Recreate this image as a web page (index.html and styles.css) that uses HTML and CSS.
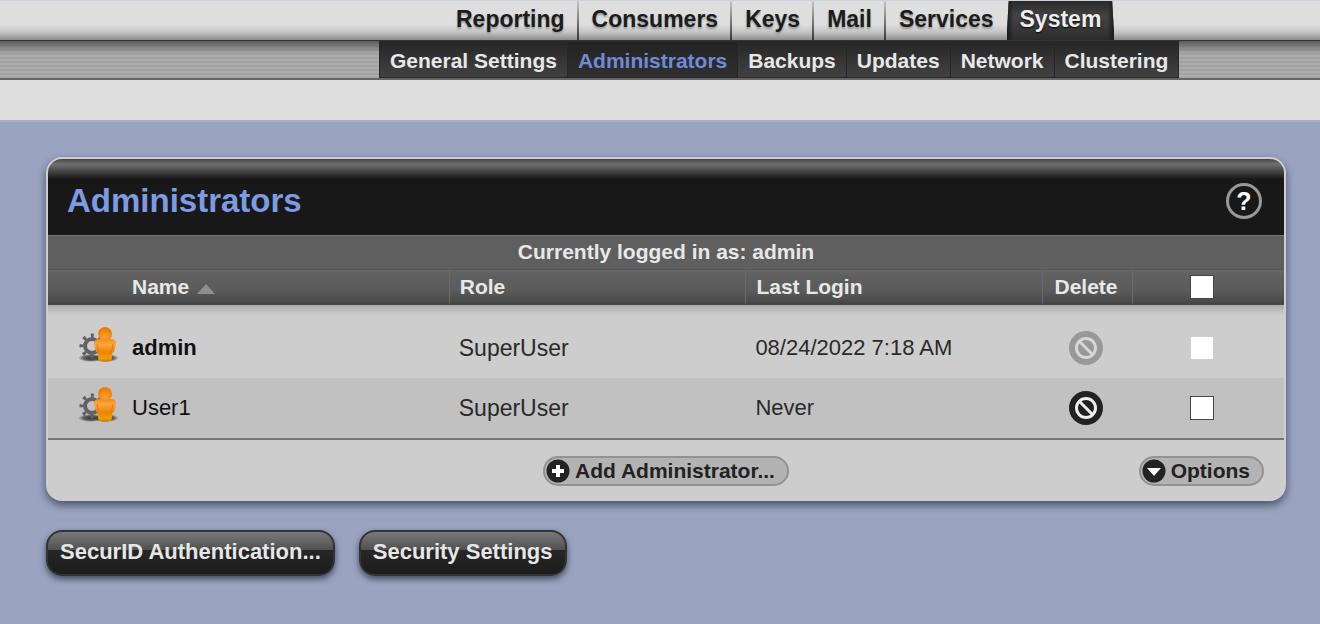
FILE: index.html
```html
<!DOCTYPE html>
<html lang="en">
<head>
	<meta charset="UTF-8">
	<title>Administrators</title>
	<link rel="stylesheet" href="styles.css">
</head>
<body>

<!-- shared icon shapes -->
<svg class="defs" width="0" height="0" aria-hidden="true">
	<defs>
		<linearGradient id="g-body" x1="0" y1="0" x2="0" y2="1">
			<stop offset="0" stop-color="#f58a0c"/>
			<stop offset="0.25" stop-color="#fba544"/>
			<stop offset="0.6" stop-color="#ee8200"/>
			<stop offset="0.85" stop-color="#f0a000"/>
			<stop offset="1" stop-color="#c07a10"/>
		</linearGradient>
		<radialGradient id="g-head" cx="0.5" cy="0.7" r="0.6">
			<stop offset="0" stop-color="#fba13c"/>
			<stop offset="1" stop-color="#ee7d00"/>
		</radialGradient>
		<radialGradient id="g-shadow">
			<stop offset="0" stop-color="#222" stop-opacity="0.9"/>
			<stop offset="0.6" stop-color="#333" stop-opacity="0.7"/>
			<stop offset="1" stop-color="#444" stop-opacity="0"/>
		</radialGradient>
	</defs>
	<symbol id="icon-user" viewBox="0 0 42 42">
		<ellipse cx="13" cy="31" rx="13" ry="4" fill="url(#g-shadow)"/>
		<ellipse cx="28" cy="31" rx="13" ry="4" fill="url(#g-shadow)"/>
		<g fill="none" stroke="#626262">
			<circle cx="14" cy="19" r="7" stroke-width="4"/>
			<circle cx="14" cy="19" r="10.500" stroke-width="4" stroke-dasharray="3 5.247" stroke-dashoffset="1.5"/>
		</g>
		<path d="M18.500 12.500Q27 10.500 35.500 12.500Q38.500 14 38 17L36 25L34.500 25.500L33.500 33.500Q27 36 20.500 33.500L19.500 25.500L18 25L16 17Q15.500 14 18.500 12.500Z" fill="url(#g-body)"/>
		<path d="M19 17L20.500 25M35 17L33.500 25" stroke="#e08010" fill="none"/>
		<circle cx="27" cy="7" r="7" fill="url(#g-head)"/>
	</symbol>
	<symbol id="icon-delete" viewBox="0 0 34 34">
		<circle cx="17" cy="17" r="17" fill="#222"/>
		<circle cx="17" cy="17" r="9.500" fill="none" stroke="#eee" stroke-width="3"/>
		<path d="M10.500 10.500L23.500 23.500" stroke="#eee" stroke-width="3"/>
	</symbol>
</svg>

<header>
	<nav class="main-nav">
		<a href="#">Reporting</a>
		<a href="#">Consumers</a>
		<a href="#">Keys</a>
		<a href="#">Mail</a>
		<a href="#">Services</a>
		<a href="#" class="active">System</a>
	</nav>
	<div class="sub-bar">
		<nav class="sub-nav">
			<a href="#">General Settings</a>
			<a href="#" class="active">Administrators</a>
			<a href="#">Backups</a>
			<a href="#">Updates</a>
			<a href="#">Network</a>
			<a href="#">Clustering</a>
		</nav>
	</div>
	<div class="strip"></div>
</header>

<main>
	<section class="panel">
		<div class="panel-title">
			<h1>Administrators</h1>
			<button type="button" class="help" aria-label="Help">?</button>
		</div>
		<div class="login-info">Currently logged in as: admin</div>
		<table>
			<colgroup>
				<col class="c-icon">
				<col class="c-name">
				<col class="c-role">
				<col class="c-login">
				<col class="c-delete">
				<col class="c-check">
			</colgroup>
			<thead>
			<tr>
				<th></th>
				<th class="name">Name<span class="sort"></span></th>
				<th>Role</th>
				<th>Last Login</th>
				<th class="center">Delete</th>
				<th class="check"><input type="checkbox" aria-label="Select all"></th>
			</tr>
			</thead>
			<tbody>
			<tr class="first">
				<td class="icon"><svg class="user" width="42" height="42"><use href="#icon-user"/></svg></td>
				<td class="name me">admin</td>
				<td class="role">SuperUser</td>
				<td>08/24/2022 7:18 AM</td>
				<td class="center"><button type="button" class="delete" aria-label="Delete admin" disabled><svg width="34" height="34"><use href="#icon-delete"/></svg></button></td>
				<td class="check"><input type="checkbox" aria-label="Select admin" disabled></td>
			</tr>
			<tr>
				<td class="icon"><svg class="user" width="42" height="42"><use href="#icon-user"/></svg></td>
				<td class="name">User1</td>
				<td class="role">SuperUser</td>
				<td>Never</td>
				<td class="center"><button type="button" class="delete" aria-label="Delete User1"><svg width="34" height="34"><use href="#icon-delete"/></svg></button></td>
				<td class="check"><input type="checkbox" aria-label="Select User1"></td>
			</tr>
			</tbody>
		</table>
		<div class="panel-foot">
			<button type="button" class="pill add">
				<svg width="24" height="24" viewBox="0 0 24 24"><circle cx="12" cy="12" r="11.500" fill="#222"/><path d="M12 6V18M6 12H18" stroke="#fff" stroke-width="4"/></svg>
				Add Administrator...
			</button>
			<button type="button" class="pill options">
				<svg width="24" height="24" viewBox="0 0 24 24"><circle cx="12" cy="12" r="11.500" fill="#222"/><path d="M5 9H19L12 17Z" fill="#fff"/></svg>
				Options
			</button>
		</div>
	</section>

	<div class="actions">
		<button type="button" class="btn">SecurID Authentication...</button>
		<button type="button" class="btn">Security Settings</button>
	</div>
</main>

</body>
</html>
```

FILE: styles.css
```css
* {
    box-sizing: border-box;
    padding: 0;
    margin: 0;
}

body {
    background: #9aa4c0;
    font: 22px "Liberation Sans", Arial, sans-serif;
    color: #2a2a2a;
}

button {
    font: inherit;
    border: 0;
    background: none;
    cursor: pointer;
}

a {
    text-decoration: none;
}

.defs {
    display: block;
}

/* top navigation */
.main-nav {
    display: flex;
    gap: 1px;
    height: 40px;
    padding-left: 444px;
    border-top: 1px solid #cdd3de;
    background: linear-gradient(#dedede 60%, #c4c4c4 80%, #8c8c8c);
}

.main-nav a {
    padding: 0 12px;
    border-right: 2px solid #444;
    border-image: linear-gradient(#c8c8c8, #333) 1;
    font-size: 23px;
    font-weight: bold;
    line-height: 36px;
    color: #1c1c1c;
    text-shadow: 0 2px 2px #999;
}

.main-nav a:nth-child(5) {
    border-right: 0;
}

.main-nav .active {
    padding: 0 13px;
    border: 0;
    background: linear-gradient(to right, #1a1a1a, transparent 6%, transparent 94%, #1a1a1a), linear-gradient(#2a2a2a, #444 40%, #2c2c2c);
    color: #eee;
    text-shadow: 0 1px 2px #000;
    clip-path: polygon(2% 0, 98% 0, 100% 100%, 0 100%);
}

.sub-bar {
    display: flex;
    height: 40px;
    padding-left: 379px;
    border-top: 1px solid #333;
    border-bottom: 2px solid #666;
    background: linear-gradient(#5c5c5c, rgba(140, 140, 140, 0) 35%), repeating-linear-gradient(#a2a2a2 0 2px, #acacac 2px 4px);
}

.sub-nav {
    display: flex;
    border: 1px solid #282828;
    background: linear-gradient(#262626, #424242);
}

.sub-nav a {
    padding: 0 10px;
    border-right: 1px solid #262626;
    font-size: 21px;
    font-weight: bold;
    line-height: 37px;
    color: #e8e8e8;
}

.sub-nav a:last-child {
    border: 0;
}

.sub-nav .active {
    background: linear-gradient(#222, #303030);
    color: #6f8bd6;
}

.strip {
    height: 42px;
    border-bottom: 2px solid #adb0b8;
    background: #dedede;
}

main {
    padding: 35px 34px 40px 46px;
}

/* panel */
.panel {
    border: 2px solid #ccced2;
    border-radius: 16px;
    background: #cdcdcd;
    box-shadow: 0 4px 8px rgba(30, 35, 55, 0.65);
    overflow: hidden;
}

.panel-title {
    display: flex;
    align-items: center;
    justify-content: space-between;
    height: 76px;
    padding: 8px 22px 0 19px;
    background: linear-gradient(#444, #707070 5px, #181818 20px);
}

.panel-title h1 {
    font-size: 33px;
    color: #7d9be0;
}

.help {
    width: 36px;
    height: 36px;
    border: 3px solid #999;
    border-radius: 50%;
    font-size: 25px;
    font-weight: bold;
    line-height: 30px;
    color: #fff;
}

.login-info {
    height: 34px;
    border-top: 1px solid #777;
    background: #5f5f5f;
    font-size: 21px;
    font-weight: bold;
    line-height: 32px;
    text-align: center;
    color: #e8e8e8;
}

table {
    width: 100%;
    table-layout: fixed;
    border-collapse: separate;
    border-spacing: 0;
}

.c-icon {
    width: 84px;
}

.c-role,
.c-login {
    width: 24%;
}

.c-delete {
    width: 90px;
}

.c-check {
    width: 152px;
}

th {
    height: 36px;
    padding-left: 10px;
    border-top: 1px solid #555;
    border-bottom: 2px solid #444;
    border-left: 1px solid #6a6a6a;
    background: linear-gradient(#666, #5f5f5f 20%, #5c5c5c 60%, #484848);
    font-size: 21px;
    text-align: left;
    color: #e8e8e8;
}

th:nth-child(-n+2) {
    border-left: 0;
}

td {
    height: 60px;
    padding-left: 10px;
    background: #c1c1c1;
}

.first td {
    height: 73px;
    padding-top: 13px;
    background: linear-gradient(#aaa, #cdcdcd 10px);
}

th.name,
td.name {
    padding-left: 0;
}

td.name {
    color: #111;
}

.me {
    font-weight: bold;
}

.role {
    font-size: 23px;
}

td.icon {
    padding-left: 30px;
}

.user,
.delete,
.delete svg,
.pill svg {
    display: block;
}

.sort {
    display: inline-block;
    margin-left: 8px;
    border: 9px solid transparent;
    border-top: 0;
    border-bottom: 10px solid #8e8e8e;
}

th.center,
td.center {
    padding-left: 0;
    padding-right: 3px;
    text-align: center;
}

.delete {
    margin: 0 auto;
}

.delete:disabled {
    opacity: 0.3;
}

th.check,
td.check {
    padding-left: 0;
    padding-right: 13px;
    text-align: center;
}

input {
    display: block;
    width: 24px;
    height: 24px;
    margin: 0 auto;
    border: 1px solid #444;
    background: #fff;
    appearance: none;
}

input:checked {
    box-shadow: inset 0 0 0 5px #fff;
    background: #333;
}

input:disabled {
    border-color: #cdcdcd;
}

.panel-foot {
    display: grid;
    grid-template-columns: 1fr auto 1fr;
    align-items: center;
    height: 61px;
    padding: 2px 20px 0;
    border-top: 2px solid #777;
}

.pill {
    display: flex;
    align-items: center;
    gap: 5px;
    height: 30px;
    padding: 0 12px 0 1px;
    border: 2px solid #929292;
    border-radius: 15px;
    background: #b3b3b3;
    font-size: 21px;
    font-weight: bold;
    color: #222;
}

.add {
    grid-column: 2;
}

.options {
    justify-self: end;
}

/* buttons under the panel */
.actions {
    display: flex;
    gap: 24px;
    margin-top: 29px;
}

.btn {
    height: 46px;
    padding: 0 12px 2px;
    border: 2px solid #333;
    border-radius: 16px;
    background: linear-gradient(#7a7a7a, #505050 42%, #262626 44%, #1c1c1c);
    box-shadow: 0 3px 6px rgba(30, 35, 55, 0.7);
    font-weight: bold;
    color: #e6e6e6;
}
```
